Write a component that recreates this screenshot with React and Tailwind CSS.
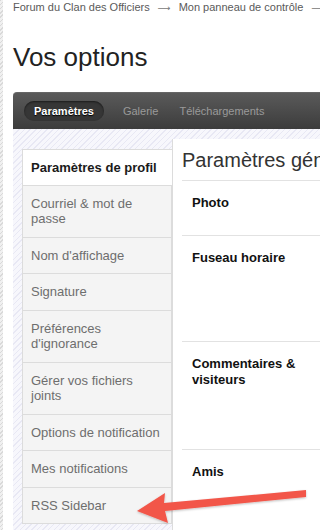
import React from "react";

const items = [
  { t: "Paramètres de profil", active: true },
  { t: "Courriel & mot de passe" },
  { t: "Nom d'affichage" },
  { t: "Signature" },
  { t: "Préférences d'ignorance" },
  { t: "Gérer vos fichiers joints" },
  { t: "Options de notification" },
  { t: "Mes notifications" },
  { t: "RSS Sidebar" },
];

const rows = [
  { t: "Photo", h: "h-[55px]" },
  { t: "Fuseau horaire", h: "h-[106px]" },
  { t: "Commentaires & visiteurs", h: "h-[108px]" },
  { t: "Amis", h: "h-[120px]" },
];

export default function App() {
  return (
    <div className="relative w-[320px] h-[530px] overflow-hidden bg-white flex font-['Liberation_Sans',Arial,sans-serif]">
      <div className="w-[3px] shrink-0 bg-[repeating-linear-gradient(135deg,#d9d9d9_0px,#d9d9d9_1px,#f0f0f0_1px,#f0f0f0_3px)]" />
      <div className="flex-1 min-w-0 pl-[10px] flex flex-col">
        <div className="h-[14px] leading-[14px] text-[11px] text-[#5a5a5a] whitespace-nowrap">
          Forum du Clan des Officiers
          <span className="mx-[8px] text-[#777] font-['DejaVu_Sans',sans-serif] text-[9px]">⟶</span>
          Mon panneau de contrôle
          <span className="mx-[8px] text-[#777] font-['DejaVu_Sans',sans-serif] text-[9px]">⟶</span>
        </div>
        <div className="mt-[28px] text-[26px] leading-[30px] text-[#222] whitespace-nowrap">Vos options</div>
        <div className="mt-[20px] flex-1 flex flex-col">
          <div className="h-[37px] rounded-tl-[4px] bg-[linear-gradient(#5a5a5a,#3c3c3c)] border-t border-[#666] flex items-center pl-[11px] text-[11px] whitespace-nowrap">
            <div className="h-[20px] px-[10px] rounded-full bg-[#363636] shadow-[inset_0_1px_2px_rgba(0,0,0,0.5)] flex items-center font-bold text-white [text-shadow:0_1px_1px_#000]">
              Paramètres
            </div>
            <div className="ml-[19px] text-[#9a9a9a]">Galerie</div>
            <div className="ml-[21px] text-[#9a9a9a]">Téléchargements</div>
          </div>
          <div className="flex-1 flex items-start bg-[repeating-linear-gradient(135deg,#e8e8f4_0px,#e8e8f4_1px,#f7f7fc_1px,#f7f7fc_4px)]">
            <div className="mt-[20px] ml-[9px] w-[150px] shrink-0 border-l border-t border-[#dcdcdc] text-[13px] leading-[15.5px]">
              {items.map((it, i) => (
                <div
                  key={i}
                  className={
                    it.active
                      ? "bg-white font-bold text-[#1a1a1a] pl-[8px] pr-[9px] pt-[10px] pb-[9px] border-b border-[#dcdcdc]"
                      : "bg-[#f4f4f4] text-[#6e6e6e] pl-[8px] pr-[9px] py-[10px] border-b border-r border-[#dcdcdc]"
                  }
                >
                  {it.t}
                </div>
              ))}
            </div>
            <div className="mt-[10px] flex-1 min-w-0 self-stretch bg-white border-l border-[#dcdcdc]">
              <div className="ml-[9px]">
                <div className="pt-[9px] pb-[8px] text-[20px] leading-[24px] text-[#333] whitespace-nowrap border-b border-[#e2e2e2]">
                  Paramètres généraux
                </div>
                {rows.map((r, i) => (
                  <div key={i} className={`${r.h} border-b border-[#e2e2e2] pl-[10px] pt-[14px]`}>
                    <div className="w-[118px] font-bold text-[13px] leading-[16px] text-[#111]">{r.t}</div>
                  </div>
                ))}
              </div>
            </div>
          </div>
        </div>
      </div>
      <svg className="absolute left-0 top-0 pointer-events-none" width="320" height="530" viewBox="0 0 320 530">
        <defs>
          <filter id="sh" x="-10%" y="-50%" width="120%" height="200%">
            <feDropShadow dx="0" dy="1" stdDeviation="1" floodColor="#000" floodOpacity="0.25" />
          </filter>
        </defs>
        <polygon
          points="137,511 165,493 164,503 306,490 306,497 165,511 168,523"
          fill="#f2574a"
          filter="url(#sh)"
        />
      </svg>
    </div>
  );
}
